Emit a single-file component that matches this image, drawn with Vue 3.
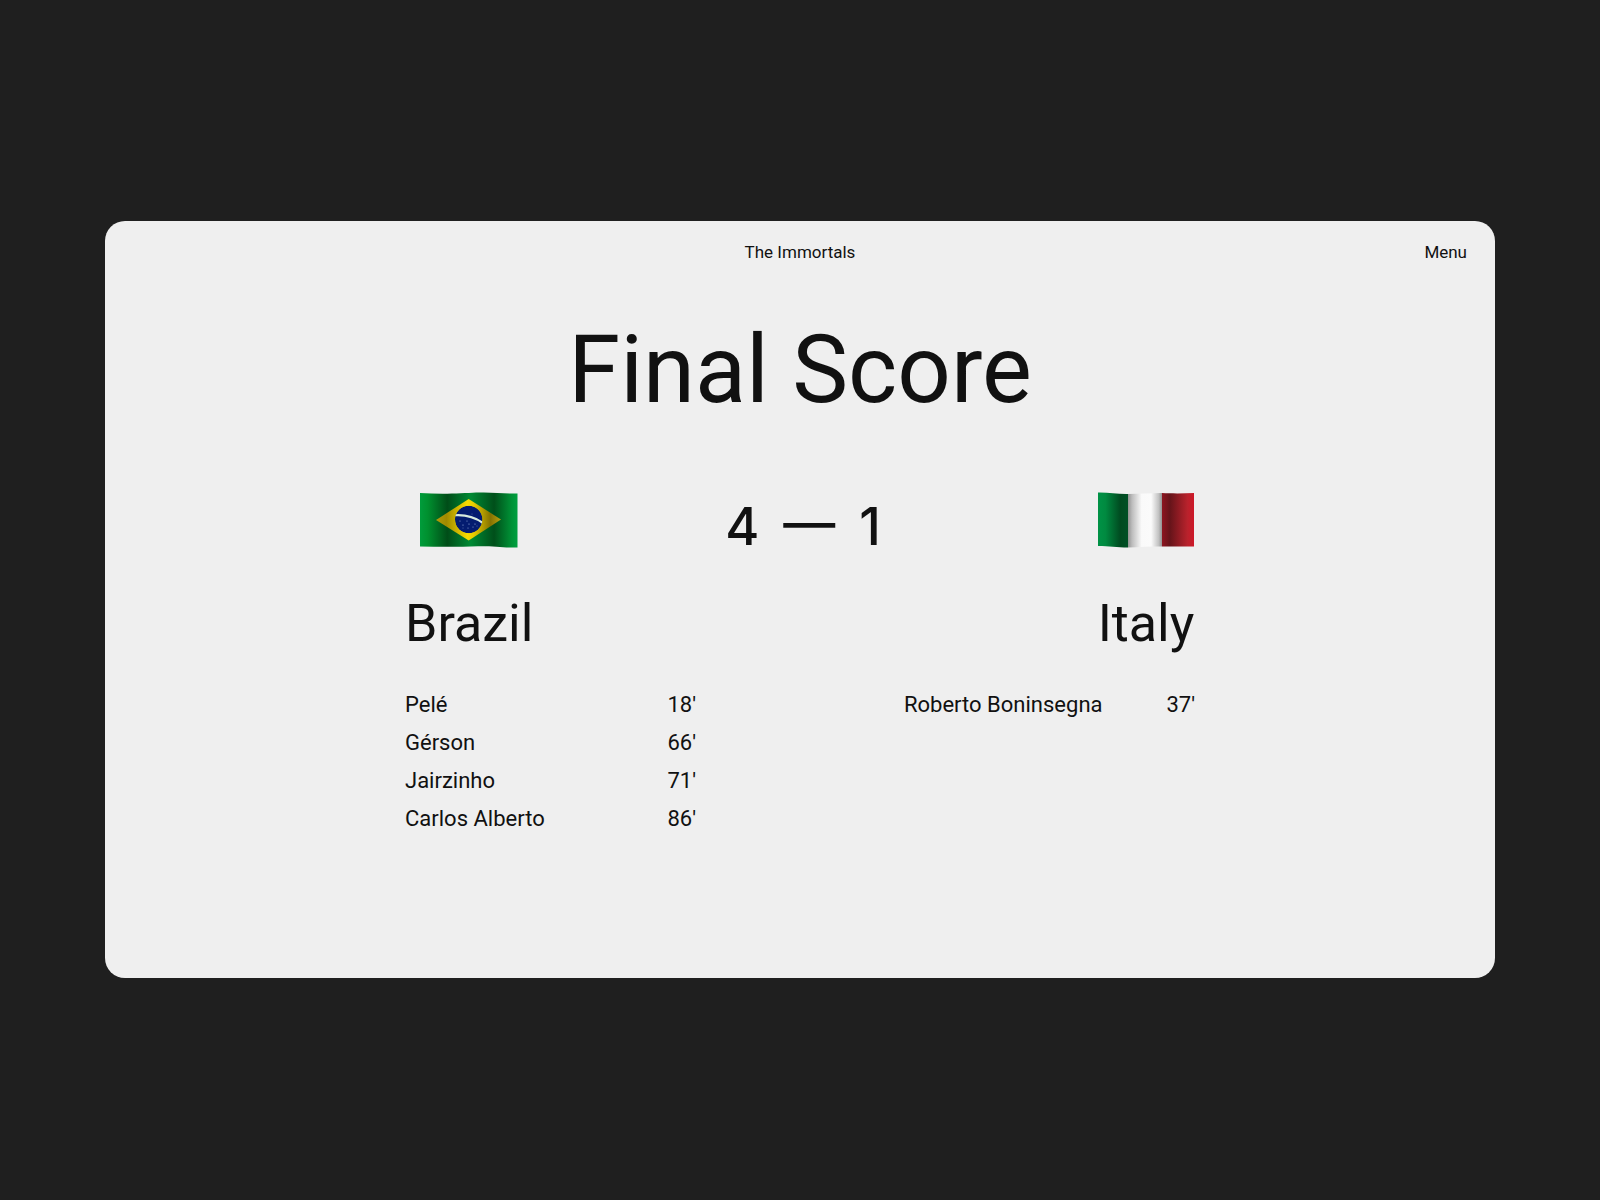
<template>
  <main class="page">
    <section class="card">
      <header class="topbar">
        <a class="brand" href="#">The Immortals</a>
        <button class="menu" type="button">Menu</button>
      </header>

      <h1 class="title">Final Score</h1>

      <div class="match">
        <div class="summary">
          <div class="team home">
            <svg class="flag" viewBox="0 0 98 56" role="img" aria-label="Flag of Brazil">
              <defs>
                <linearGradient id="br-green">
                  <stop offset="0" stop-color="#009c3b" />
                  <stop offset="0.08" stop-color="#00902f" />
                  <stop offset="0.28" stop-color="#004d18" />
                  <stop offset="0.52" stop-color="#008a34" />
                  <stop offset="0.76" stop-color="#004f1a" />
                  <stop offset="0.94" stop-color="#009236" />
                  <stop offset="1" stop-color="#00a040" />
                </linearGradient>
                <linearGradient id="br-yellow">
                  <stop offset="0" stop-color="#b39b0a" />
                  <stop offset="0.16" stop-color="#a08a00" />
                  <stop offset="0.48" stop-color="#f7dc00" />
                  <stop offset="0.58" stop-color="#e8cc00" />
                  <stop offset="0.84" stop-color="#857200" />
                  <stop offset="1" stop-color="#b8a010" />
                </linearGradient>
                <clipPath id="br-globe">
                  <circle cx="48.7" cy="27.5" r="13.7" />
                </clipPath>
              </defs>
              <path d="M0 1C20 2.500 42 1.500 56 .6C72 -.3 84 2 97.500 1.500V55.500C84 56 74 54 58 54.300C40 55 20 55 0 54.500Z" fill="url(#br-green)" />
              <path d="M16 28L48.700 7L81 27.500L48.700 48.500Z" fill="url(#br-yellow)" />
              <g clip-path="url(#br-globe)">
                <circle cx="48.7" cy="27.5" r="13.7" fill="#041c70" />
                <path d="M34 23.300C44 22.500 54 24.500 63 31" fill="none" stroke="#d8ecdf" stroke-width="2.2" />
                <g fill="#9db4e0">
                  <circle cx="40" cy="29" r=".5" />
                  <circle cx="43" cy="33" r=".6" />
                  <circle cx="47" cy="29" r=".5" />
                  <circle cx="49" cy="32" r=".6" />
                  <circle cx="48" cy="36" r=".5" />
                  <circle cx="53" cy="35" r=".5" />
                  <circle cx="55" cy="32" r=".6" />
                  <circle cx="57" cy="34" r=".4" />
                  <circle cx="43" cy="36" r=".4" />
                  <circle cx="52" cy="22" r=".4" />
                </g>
              </g>
            </svg>
            <h2 class="country">Brazil</h2>
          </div>

          <p class="score">
            <span>4</span>
            <span class="dash">—</span>
            <span>1</span>
          </p>

          <div class="team away">
            <svg class="flag" viewBox="0 0 98 56" role="img" aria-label="Flag of Italy">
              <defs>
                <linearGradient id="it-green">
                  <stop offset="0" stop-color="#009246" />
                  <stop offset="0.25" stop-color="#008a40" />
                  <stop offset="0.75" stop-color="#004a20" />
                  <stop offset="1" stop-color="#005025" />
                </linearGradient>
                <linearGradient id="it-white">
                  <stop offset="0" stop-color="#929292" />
                  <stop offset="0.12" stop-color="#bdbdbd" />
                  <stop offset="0.4" stop-color="#fafafa" />
                  <stop offset="0.68" stop-color="#fbfbfb" />
                  <stop offset="0.9" stop-color="#c2c2c2" />
                  <stop offset="1" stop-color="#929292" />
                </linearGradient>
                <linearGradient id="it-red">
                  <stop offset="0" stop-color="#8d1520" />
                  <stop offset="0.25" stop-color="#66141a" />
                  <stop offset="0.8" stop-color="#b9222c" />
                  <stop offset="1" stop-color="#ce1728" />
                </linearGradient>
              </defs>
              <path d="M1 .5C12 .3 20 2.200 31 2V55.500C20 55.500 12 54 1 54Z" fill="url(#it-green)" />
              <path d="M31 2C42 1.500 54 1.300 65 1V54.500C54 54.500 42 55 31 55.500Z" fill="url(#it-white)" />
              <path d="M65 1C74 1.500 86 1.500 97 1V54.500H65Z" fill="url(#it-red)" />
            </svg>
            <h2 class="country">Italy</h2>
          </div>
        </div>

        <div class="scorers">
          <table v-for="team in teams" :key="team.name" class="goals" :aria-label="team.name">
            <tbody>
              <tr v-for="goal in team.goals" :key="goal.player">
                <th scope="row">{{ goal.player }}</th>
                <td>{{ goal.minute }}'</td>
              </tr>
            </tbody>
          </table>
        </div>
      </div>
    </section>
  </main>
</template>

<script setup>
const teams = [
  {
    name: 'Brazil',
    goals: [
      { player: 'Pelé', minute: 18 },
      { player: 'Gérson', minute: 66 },
      { player: 'Jairzinho', minute: 71 },
      { player: 'Carlos Alberto', minute: 86 }
    ]
  },
  {
    name: 'Italy',
    goals: [{ player: 'Roberto Boninsegna', minute: 37 }]
  }
];
</script>

<style>
body {
  margin: 0;
  background: #1f1f1f;
}
</style>

<style scoped>
.page {
  display: flex;
  align-items: center;
  min-height: 100vh;
  box-sizing: border-box;
  padding: 40px 105px 42px;
  font-family: Roboto, 'Liberation Sans', sans-serif;
  color: #111;
}

.card {
  flex: 1;
  padding-bottom: 140px;
  border-radius: 20px;
  background: #efefef;
}

.topbar {
  display: grid;
  grid-template-columns: 1fr auto 1fr;
  padding: 19px 28px 0;
  font-size: 17px;
  line-height: 24px;
}

.brand {
  grid-column: 2;
  color: inherit;
  text-decoration: none;
}

.menu {
  justify-self: end;
  padding: 0;
  border: 0;
  background: none;
  font: inherit;
  color: inherit;
  cursor: pointer;
}

.title {
  margin: 56px 0 0;
  font-size: 94px;
  font-weight: 400;
  line-height: 100px;
  text-align: center;
}

.match {
  max-width: 790px;
  margin: 72px auto 0;
}

.summary {
  display: grid;
  grid-template-columns: 1fr auto 1fr;
}

.team {
  display: flex;
  flex-direction: column;
  align-items: center;
  gap: 46px;
}

.home {
  justify-self: start;
}

.away {
  justify-self: end;
}

.flag {
  display: block;
  width: 98px;
  height: 56px;
}

.country {
  margin: 0;
  font-size: 52px;
  font-weight: 400;
  line-height: 60px;
}

.score {
  display: flex;
  gap: 24px;
  margin: 0;
  padding: 12px 0 0 6px;
  font-family: Inter, 'Liberation Sans', sans-serif;
  font-size: 52px;
  font-weight: 500;
  line-height: 46px;
}

.dash {
  line-height: 38px;
}

.scorers {
  display: grid;
  grid-template-columns: 1fr 1fr;
  align-items: start;
  gap: 208px;
  margin-top: 32px;
}

.goals {
  width: 100%;
  border-collapse: collapse;
  font-size: 22px;
  line-height: 38px;
}

.goals th,
.goals td {
  padding: 0;
  font-weight: 400;
  text-align: left;
}

.goals td {
  text-align: right;
}
</style>
